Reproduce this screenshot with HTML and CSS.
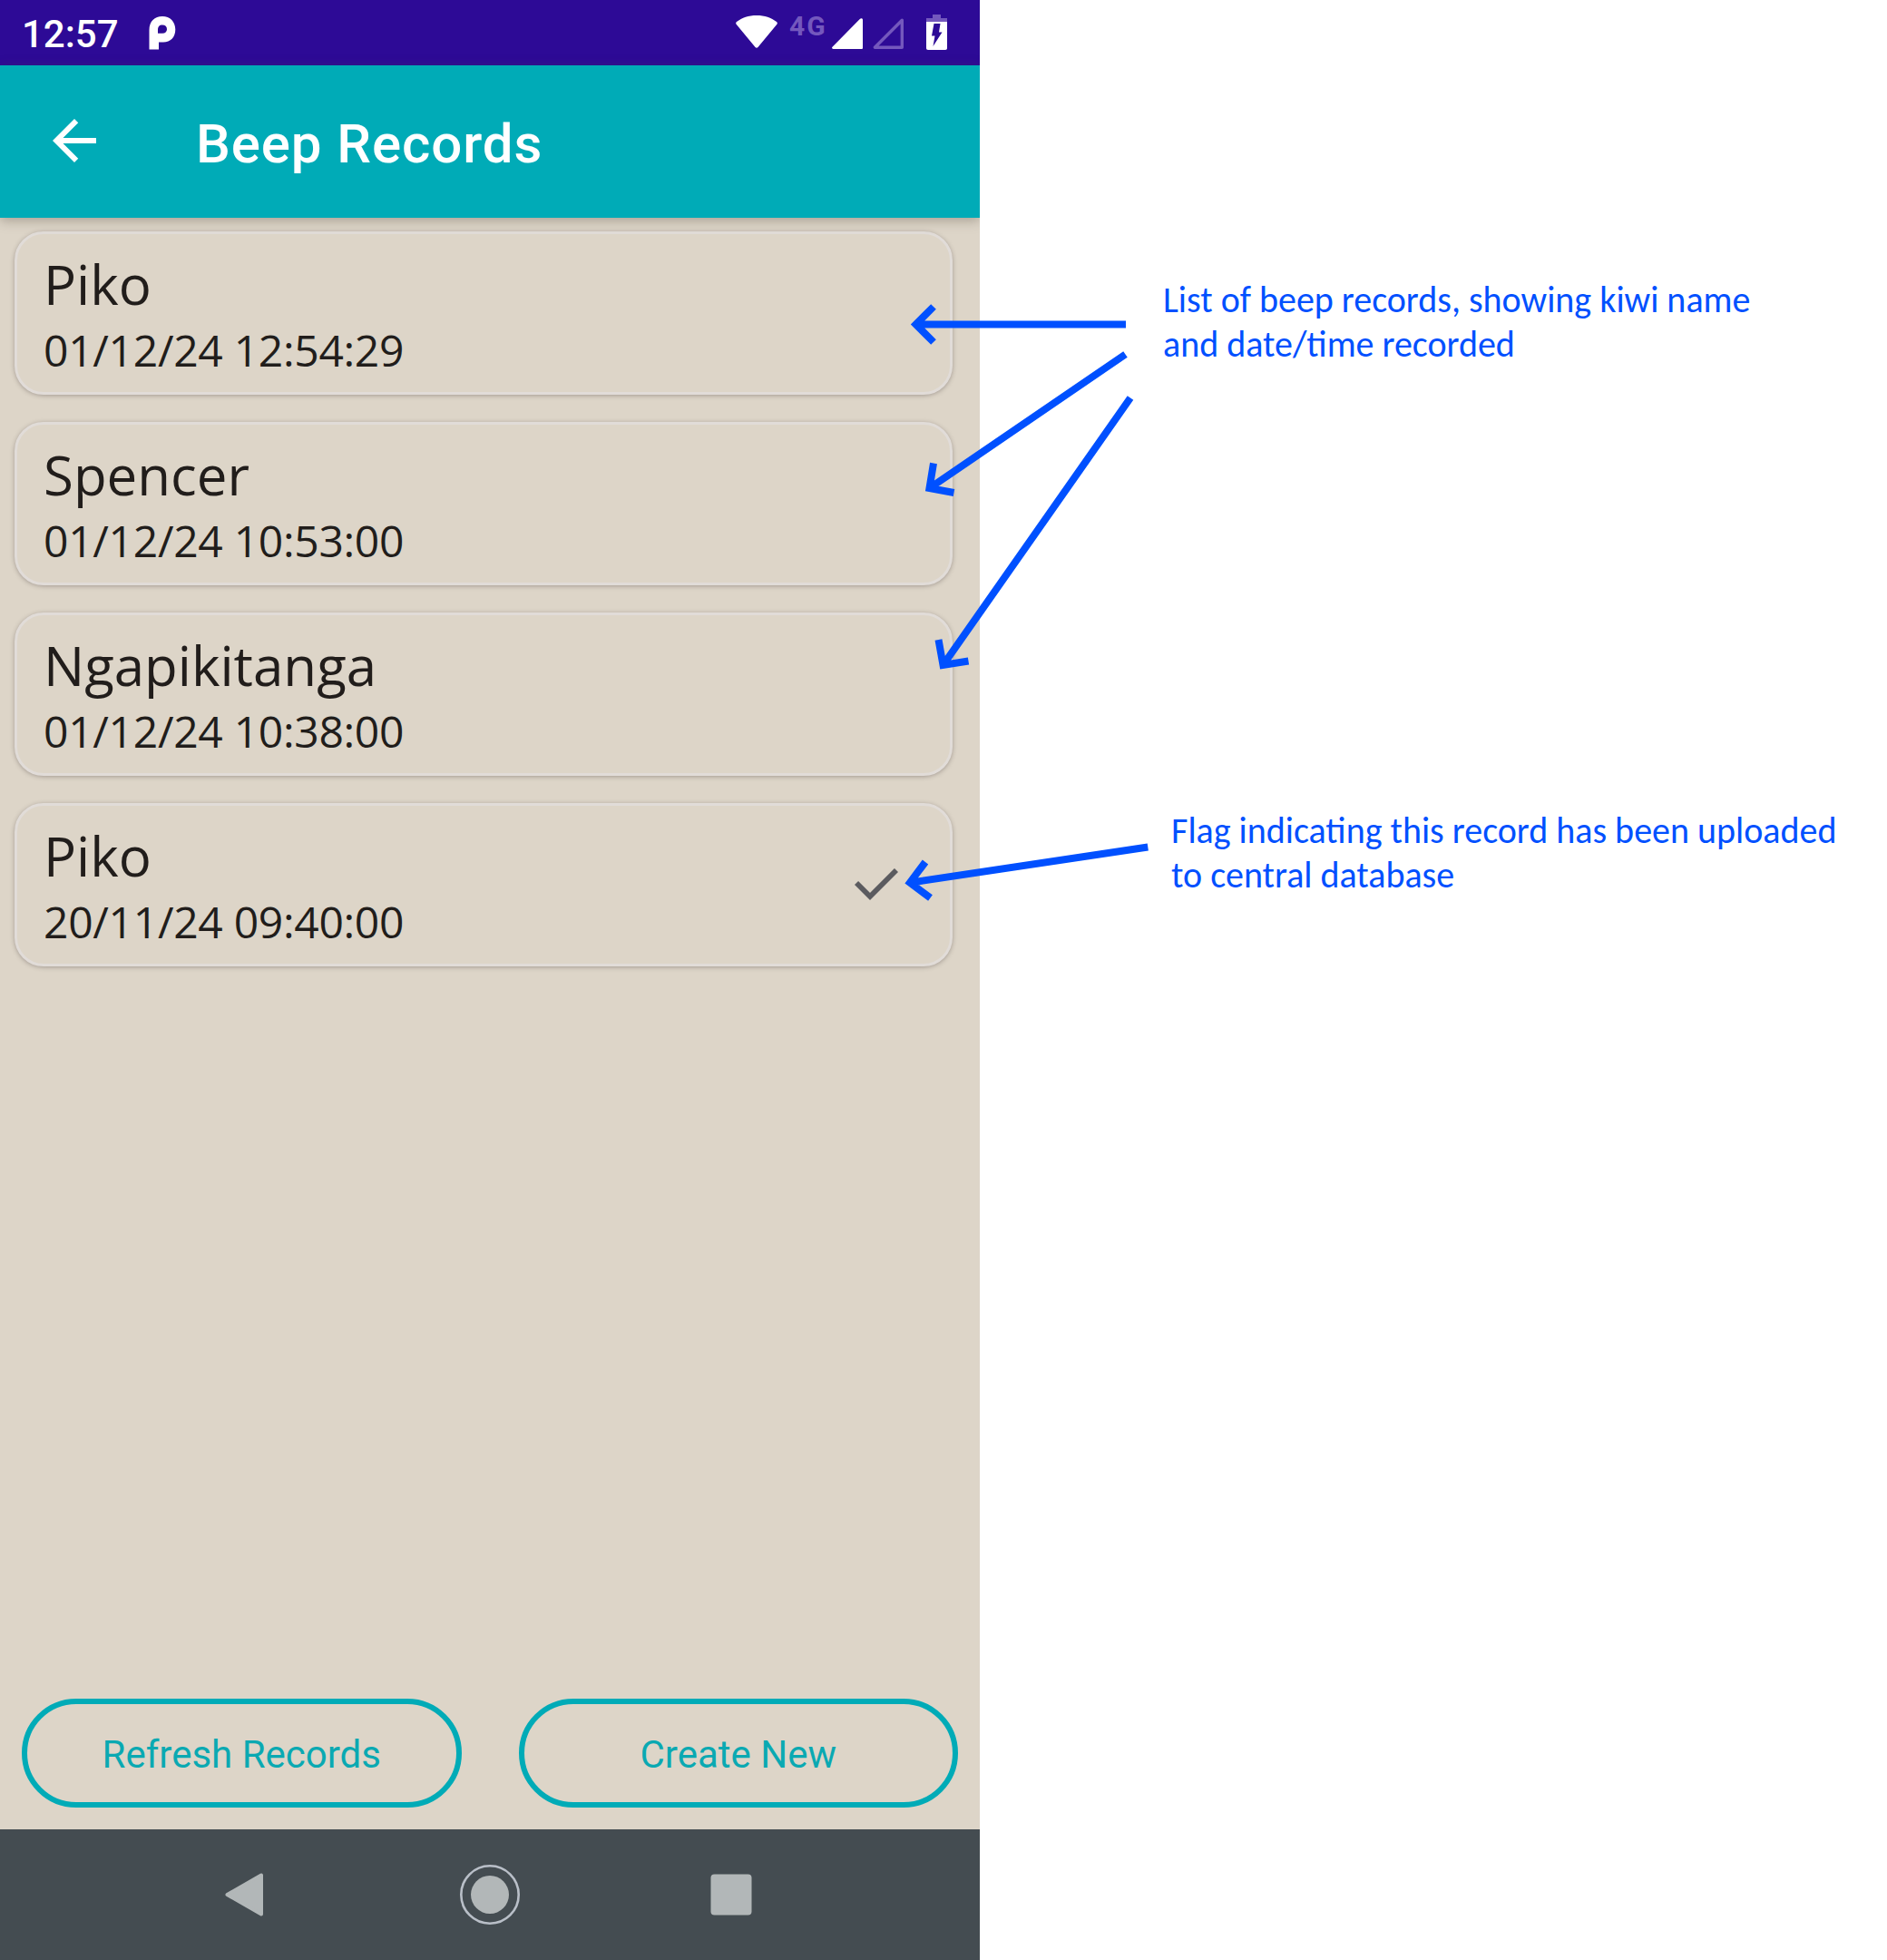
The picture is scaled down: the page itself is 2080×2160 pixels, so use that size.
FILE: index.html
```html
<!DOCTYPE html>
<html lang="en">
<head>
<meta charset="utf-8">
<title>Beep Records</title>
<link rel="stylesheet" href="styles.css">
</head>
<body>
<main class="sheet">
  <section class="phone">
    <div class="status-bar">
      <span class="clock">12:57</span>
      <svg class="icon-p" width="30" height="37" viewBox="0 0 30 37"><path fill="#fff" fill-rule="evenodd" d="M.5 36.500V15C.5 5.500 6.500 0 15 0s14.300 6 14.300 14.500S24 28.500 16 28.500h-5v8zM15 9.500c-3.500 0-5 2-5 5.500v3.800h5c3.200 0 5-2 5-4.600S18.200 9.500 15 9.500z"/></svg>
      <div class="status-icons">
        <svg class="icon-wifi" width="46" height="37" viewBox="0 0 46 37"><path fill="#fff" d="M1 7C7 2.500 14 0 23 0s16 2.500 22 7c1 .8 1.100 1.800.4 2.700L24.500 35c-.9 1.100-2.100 1.100-3 0L.6 9.700C-.1 8.800 0 7.800 1 7z"/></svg>
        <span class="network">4G</span>
        <svg class="icon-signal" width="34" height="35" viewBox="0 0 34 35"><path fill="#fff" d="M34 2v30.500c0 1-.5 1.500-1.500 1.500H1.500c-1.500 0-2-1.200-1-2.200L31 .8c1.200-1.200 3-.8 3 1.200z"/></svg>
        <svg class="icon-signal-empty" width="34" height="35" viewBox="0 0 34 35"><path fill="none" stroke="#7458bd" stroke-width="3.400" stroke-linejoin="round" d="M32.300 2.200v30.100H2.300z"/></svg>
        <svg class="icon-battery" width="23" height="39" viewBox="0 0 23 39"><path fill="#7458bd" d="M7 0h9v4h7v5H0V4h7z"/><path fill="#fff" d="M0 8h23v29c0 1.300-.7 2-2 2H2c-1.300 0-2-.7-2-2z"/><path fill="#2d0a96" d="M8.500 10h7l-1.500 9.500h3.500L7.500 35l2-11.500H6z"/></svg>
      </div>
    </div>
    <header class="app-bar">
      <svg class="icon-back" width="72" height="72" viewBox="0 0 24 24"><path fill="#fff" d="M20 11H7.830l5.590-5.590L12 4l-8 8 8 8 1.410-1.410L7.830 13H20z"/></svg>
      <h1 class="title">Beep Records</h1>
    </header>
    <div class="content">
      <ul class="records">
        <li class="card"><div><div class="name">Piko</div><div class="date">01/12/24 12:54:29</div></div></li>
        <li class="card"><div><div class="name">Spencer</div><div class="date">01/12/24 10:53:00</div></div></li>
        <li class="card"><div><div class="name">Ngapikitanga</div><div class="date">01/12/24 10:38:00</div></div></li>
        <li class="card"><div><div class="name">Piko</div><div class="date">20/11/24 09:40:00</div></div>
          <svg class="icon-check" width="48" height="36" viewBox="0 0 48 36"><path fill="none" stroke="#5b5b5f" stroke-width="5.800" d="M2 16l15 15L46 2"/></svg>
        </li>
      </ul>
      <div class="actions">
        <button class="action">Refresh Records</button>
        <button class="action">Create New</button>
      </div>
    </div>
    <nav class="nav-bar">
      <svg width="42" height="48" viewBox="0 0 42 48"><path fill="#b2b7b8" stroke="#b2b7b8" stroke-width="4" stroke-linejoin="round" d="M40 2.500v43L2.500 24z"/></svg>
      <svg class="nav-home" width="68" height="68" viewBox="0 0 68 68"><circle cx="34" cy="34" r="31.700" fill="none" stroke="#b9bfc8" stroke-width="2.600"/><circle cx="34" cy="34" r="21" fill="#b2b7b8"/></svg>
      <svg width="46" height="46" viewBox="0 0 46 46"><rect x=".5" y=".5" width="45" height="45" rx="4" fill="#b2b7b8"/></svg>
    </nav>
  </section>
  <aside class="notes">
    <p class="note note-list"><span class="line">List of beep records, showing kiwi name</span><br><span class="line">and date/time recorded</span></p>
    <p class="note note-flag"><span class="line">Flag indicating this record has been uploaded</span><br><span class="line">to central database</span></p>
  </aside>
  <svg class="arrows" width="2080" height="2160" viewBox="0 0 2080 2160">
    <path d="M1241 357.500H1009M1029 338l-19.500 19.500L1029 377"/>
    <path d="M1240.500 390.500L1024.500 538M1029 510.500l-4.500 27.500 27 5"/>
    <path d="M1246 438.500L1039.500 733M1034.500 705l5 28 28-4.500"/>
    <path d="M1265.300 933.500L1003 972.700M1020 950l-17 22.700 22.500 16.800"/>
  </svg>
</main>
</body>
</html>
```
FILE: styles.css
```css
* { box-sizing: border-box; }
body { margin: 0; background: #fff; }
svg { display: block; flex: none; }

.sheet { position: relative; display: flex; width: 2080px; height: 2160px; overflow: hidden; }

.phone { display: flex; flex-direction: column; width: 1080px; height: 2160px; overflow: hidden; background: #ddd5c8; font-family: Roboto, sans-serif; }

.status-bar { display: flex; height: 72px; padding: 0 36px 0 24px; background: #2d0a96; color: #fff; }
.clock { width: 140px; font-size: 42px; font-weight: 500; line-height: 76px; }
.icon-p { margin-top: 18px; }
.status-icons { display: flex; margin-left: auto; }
.icon-wifi { margin-top: 17px; }
.network { width: 60px; padding-left: 13px; margin-top: 11px; font-size: 30px; font-weight: 700; line-height: 36px; letter-spacing: 2px; color: #7458bd; }
.icon-signal { margin-top: 20px; }
.icon-signal-empty { margin: 20px 25px 0 11px; }
.icon-battery { margin-top: 16px; }

.app-bar { position: relative; display: flex; height: 168px; padding-left: 46px; background: #00abb7; color: #fff; box-shadow: 0 3px 12px rgba(70, 60, 50, .35); }
.icon-back { margin-top: 47px; }
.title { margin: 0 0 0 98px; font-size: 60px; font-weight: 500; line-height: 174px; letter-spacing: .9px; white-space: nowrap; }

.content { display: flex; flex: 1; flex-direction: column; justify-content: space-between; padding: 15px 24px 24px 16px; }
.records { display: grid; gap: 30px; width: 1034px; margin: 0; padding: 0; list-style: none; }
.card { display: flex; justify-content: space-between; align-items: flex-start; height: 180px; padding: 14px 57px 0 29px; border: 3px solid #e1dcd8; border-radius: 32px; background: #ddd5c8; box-shadow: 0 1px 5px rgba(60, 50, 50, .36); font-family: "Open Sans", sans-serif; color: #211d1b; }
.name { font-size: 60px; line-height: 82px; font-kerning: none; }
.date { margin-top: -1px; font-size: 48px; line-height: 65px; letter-spacing: -.3px; }
.icon-check { margin-top: 55px; }

.actions { display: flex; gap: 63px; padding-left: 8px; }
.action { flex: 1; height: 120px; padding: 2px 0 0; border: 6px solid #00abb7; border-radius: 60px; background: none; color: #0aa9b2; font: 400 42px Roboto, sans-serif; }

.nav-bar { display: flex; align-items: center; justify-content: space-between; height: 144px; padding: 0 251px 0 248px; background: #444c51; }
.nav-home { margin: 0 -3px 0 3px; }

.notes { padding: 306px 0 0 202px; color: #0050ff; font-family: Carlito, Calibri, Lato, sans-serif; font-size: 40px; }
.note { margin: 0; line-height: 49px; white-space: nowrap; }
.note-flag { margin-top: 487px; padding-left: 9px; }

.arrows { position: absolute; inset: 0; fill: none; stroke: #0050ff; stroke-width: 8; }
```
